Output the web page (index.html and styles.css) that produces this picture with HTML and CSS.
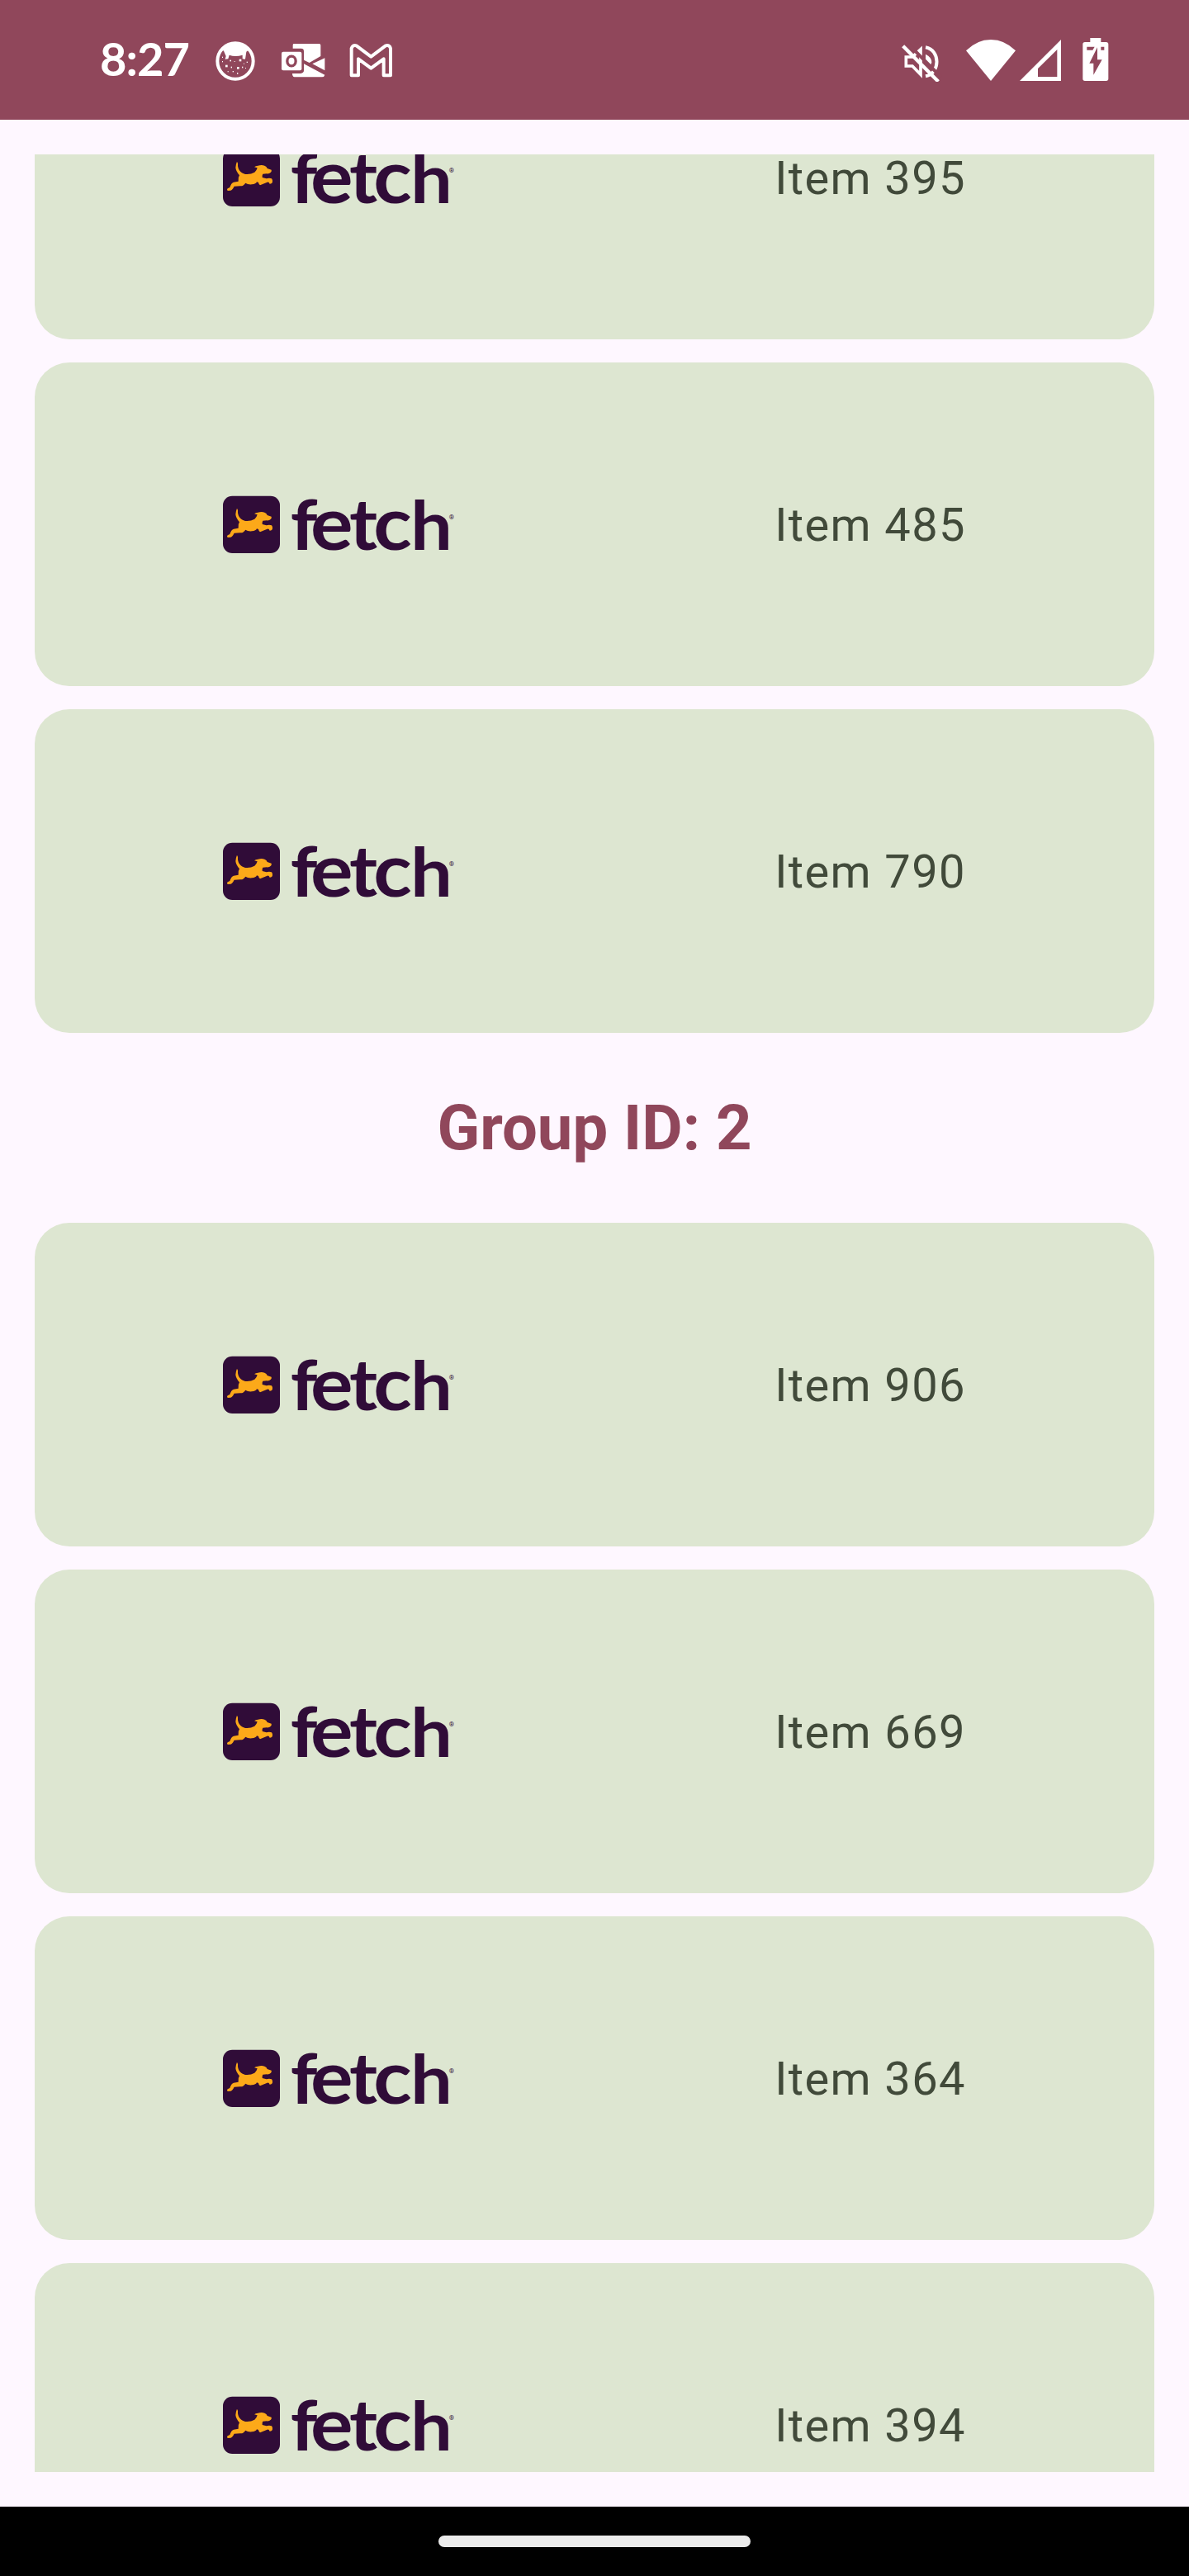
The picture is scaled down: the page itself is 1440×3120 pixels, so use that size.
FILE: index.html
```html
<!DOCTYPE html>
<html lang="en">
<head>
<meta charset="utf-8">
<title>Items</title>
<link rel="stylesheet" href="styles.css">
</head>
<body>
<svg class="defs" aria-hidden="true">
  <symbol id="logo" viewBox="45 45 840 210">
    <rect x="45" y="47" width="207" height="208" rx="34" fill="#300c38"/>
    <path fill="#fca919" d="M96 92Q101 98 99 108C101 123 110 133 126 138Q145 140 160 131Q168 124 170 115L159 112Q164 107 172 107Q186 103 196 107Q204 109 206 117L221 122Q223 127 219 131Q213 137 204 136L190 137Q187 141 188 150L203 154Q213 150 222 154Q226 158 225 166Q224 173 215 173Q212 165 206 167L180 178Q175 175 174 168L168 166Q165 174 150 175Q135 176 127 170Q119 182 108 181L86 182Q79 196 73 197L62 198Q58 194 62 190L70 186Q75 170 84 167L101 164Q99 150 105 142Q92 127 91 114Q92 101 96 92Z"/>
    <text class="wordmark" transform="scale(1.08 1)" y="244"><tspan class="wm-f" x="269">f</tspan><tspan class="wm-round" x="336">e</tspan><tspan class="wm-t" x="467">t</tspan><tspan class="wm-round" x="548">c</tspan><tspan class="wm-h" x="673">h</tspan></text>
    <text class="registered" x="866" y="133">®</text>
  </symbol>
</svg>
<div class="screen">
  <header class="status">
    <div class="status-group">
      <span class="time">8:27</span>
      <svg class="ic-cat" width="48" height="48" viewBox="0 0 144 144">
        <circle cx="72" cy="72" r="65" fill="none" stroke="#fff" stroke-width="12"/>
        <path fill="#fff" d="M22 30Q72-18 122 30L112 38L108 65L98 64L98 50Q72 58 50 50L46 64L35 65L38 54L30 35Z"/>
        <g fill="#fff"><rect x="86" y="65" width="8" height="8"/><rect x="36" y="86" width="8" height="8"/><rect x="78" y="93" width="8" height="8"/><rect x="52" y="68" width="5" height="5"/><rect x="68" y="72" width="3" height="3"/><rect x="24" y="56" width="3" height="4"/><rect x="24" y="72" width="3" height="4"/><rect x="56" y="92" width="4" height="5"/><rect x="96" y="92" width="4" height="5"/><rect x="113" y="74" width="4" height="4"/><rect x="102" y="80" width="3" height="3"/><rect x="44" y="108" width="3" height="4"/><rect x="62" y="108" width="4" height="4"/><rect x="78" y="114" width="4" height="5"/><rect x="108" y="96" width="3" height="3"/></g>
      </svg>
      <svg class="ic-outlook" width="54" height="42" viewBox="0 0 162 126">
        <path fill="#fff" d="M47 3H140Q145 3 145 8V48L104 72L84 62V30Q84 20 74 20H44V8Q44 3 47 3ZM160 55V100L115 76ZM42 111H72Q84 110 84 100V76L160 116Q158 124 150 124H50Q42 123 42 111Z"/>
        <rect x="3" y="32" width="73" height="68" rx="6" fill="#fff"/>
        <ellipse cx="39" cy="66" rx="15.500" ry="17.500" fill="none" stroke="#90475b" stroke-width="10"/>
      </svg>
      <svg class="ic-mail" width="53" height="42" viewBox="0 0 159 126">
        <path fill="none" stroke="#fff" stroke-width="12" stroke-linejoin="round" d="M8 118V20Q12 6 26 10L79 50L132 10Q147 6 150 20V118H125V58L79 92L33 58V118Z"/>
      </svg>
    </div>
    <div class="status-group">
      <svg class="ic-mute" width="50" height="50" viewBox="0 0 150 150">
        <g fill="none" stroke="#fff">
          <path stroke-width="11" d="M19 60H42L72 32V124L42 93H19Z"/>
          <path stroke-width="12" d="M90 25C144 35 144 119 90 130"/>
        </g>
        <path fill="#fff" d="M90 50Q112 60 112 80L106 94L90 82Z"/>
        <path stroke="#90475b" stroke-width="12" d="M16 2L146 133"/>
        <path stroke="#90475b" stroke-width="8" d="M82 20V140"/>
        <path stroke="#fff" stroke-width="13" d="M8 20L136 149"/>
      </svg>
      <svg class="ic-wifi" width="60" height="50" viewBox="0 0 180 150">
        <path fill="#fff" d="M0 40Q40 0 90 0T180 40L90 150Z"/>
      </svg>
      <svg class="ic-signal" width="50" height="50" viewBox="0 0 150 150">
        <path fill="#fff" fill-rule="evenodd" d="M150 0V150H0ZM136 36L66 105V135H136Z"/>
      </svg>
      <svg class="ic-battery" width="32" height="52" viewBox="0 0 96 156">
        <path fill="#fff" fill-rule="evenodd" d="M28 0H67V15H86Q94 15 94 23V148Q94 156 86 156H9Q1 156 1 148V23Q1 15 9 15H28ZM16 32V44H37L44 32ZM67 32V44H79V32ZM54 34L25 92H40V134L71 79H54Z"/>
      </svg>
    </div>
  </header>
  <main class="list">
    <div class="card"><svg class="logo"><use href="#logo"/></svg><span class="name">Item 395</span></div>
    <div class="card"><svg class="logo"><use href="#logo"/></svg><span class="name">Item 485</span></div>
    <div class="card"><svg class="logo"><use href="#logo"/></svg><span class="name">Item 790</span></div>
    <h2 class="group">Group ID: 2</h2>
    <div class="card"><svg class="logo"><use href="#logo"/></svg><span class="name">Item 906</span></div>
    <div class="card"><svg class="logo"><use href="#logo"/></svg><span class="name">Item 669</span></div>
    <div class="card"><svg class="logo"><use href="#logo"/></svg><span class="name">Item 364</span></div>
    <div class="card"><svg class="logo"><use href="#logo"/></svg><span class="name">Item 394</span></div>
  </main>
  <footer class="navbar"><div class="pill"></div></footer>
</div>
</body>
</html>
```
FILE: styles.css
```css
* { box-sizing: border-box; }
body { margin: 0; background: #fef7ff; font-family: Roboto, "Liberation Sans", sans-serif; }
.defs { display: none; }
.screen { width: 1440px; height: 3120px; display: flex; flex-direction: column; overflow: hidden; }

.status { height: 145px; flex: none; background: #90475b; display: flex; justify-content: space-between; padding: 0 97px 0 121px; }
.status-group { display: flex; align-items: flex-start; }
.status svg { display: block; flex: none; }
.time { width: 140px; padding-top: 37px; font: 700 56px/67px Lato, sans-serif; letter-spacing: -1px; color: #fff; }
.ic-cat { margin-top: 50px; }
.ic-outlook { margin: 52px 0 0 31px; }
.ic-mail { margin: 52px 0 0 29px; }
.ic-mute { margin-top: 49px; }
.ic-wifi { margin: 48px 0 0 29px; }
.ic-signal { margin: 48px 0 0 5px; }
.ic-battery { margin: 46px 0 0 26px; }

.list { height: 2807px; flex: none; margin: 42px; display: flex; flex-direction: column; gap: 28px; overflow: hidden; }
.card { height: 392px; flex: none; border-radius: 42px; background: #dde6d1; display: flex; align-items: center; justify-content: space-between; padding: 0 228px; }
.card:first-child { margin-top: -168px; }
.logo { width: 280px; height: 70px; display: block; }
.wordmark { font-family: Lato, sans-serif; font-weight: 700; fill: #300c38; }
.wm-f { font-size: 254px; }
.wm-round { font-size: 268px; }
.wm-t { font-size: 256px; }
.wm-h { font-size: 249px; }
.registered { font-family: Roboto, sans-serif; font-size: 24px; fill: #300c38; }
.name { padding-top: 2px; font-size: 56px; line-height: 84px; letter-spacing: 1.4px; color: #414a3a; }
.group { height: 174px; flex: none; margin: 0; display: flex; align-items: center; justify-content: center; font-size: 76px; font-weight: 700; color: #90475b; }

.navbar { height: 84px; flex: none; background: #000; display: flex; align-items: center; justify-content: center; }
.pill { width: 378px; height: 14px; border-radius: 7px; background: #ebebeb; }
```
